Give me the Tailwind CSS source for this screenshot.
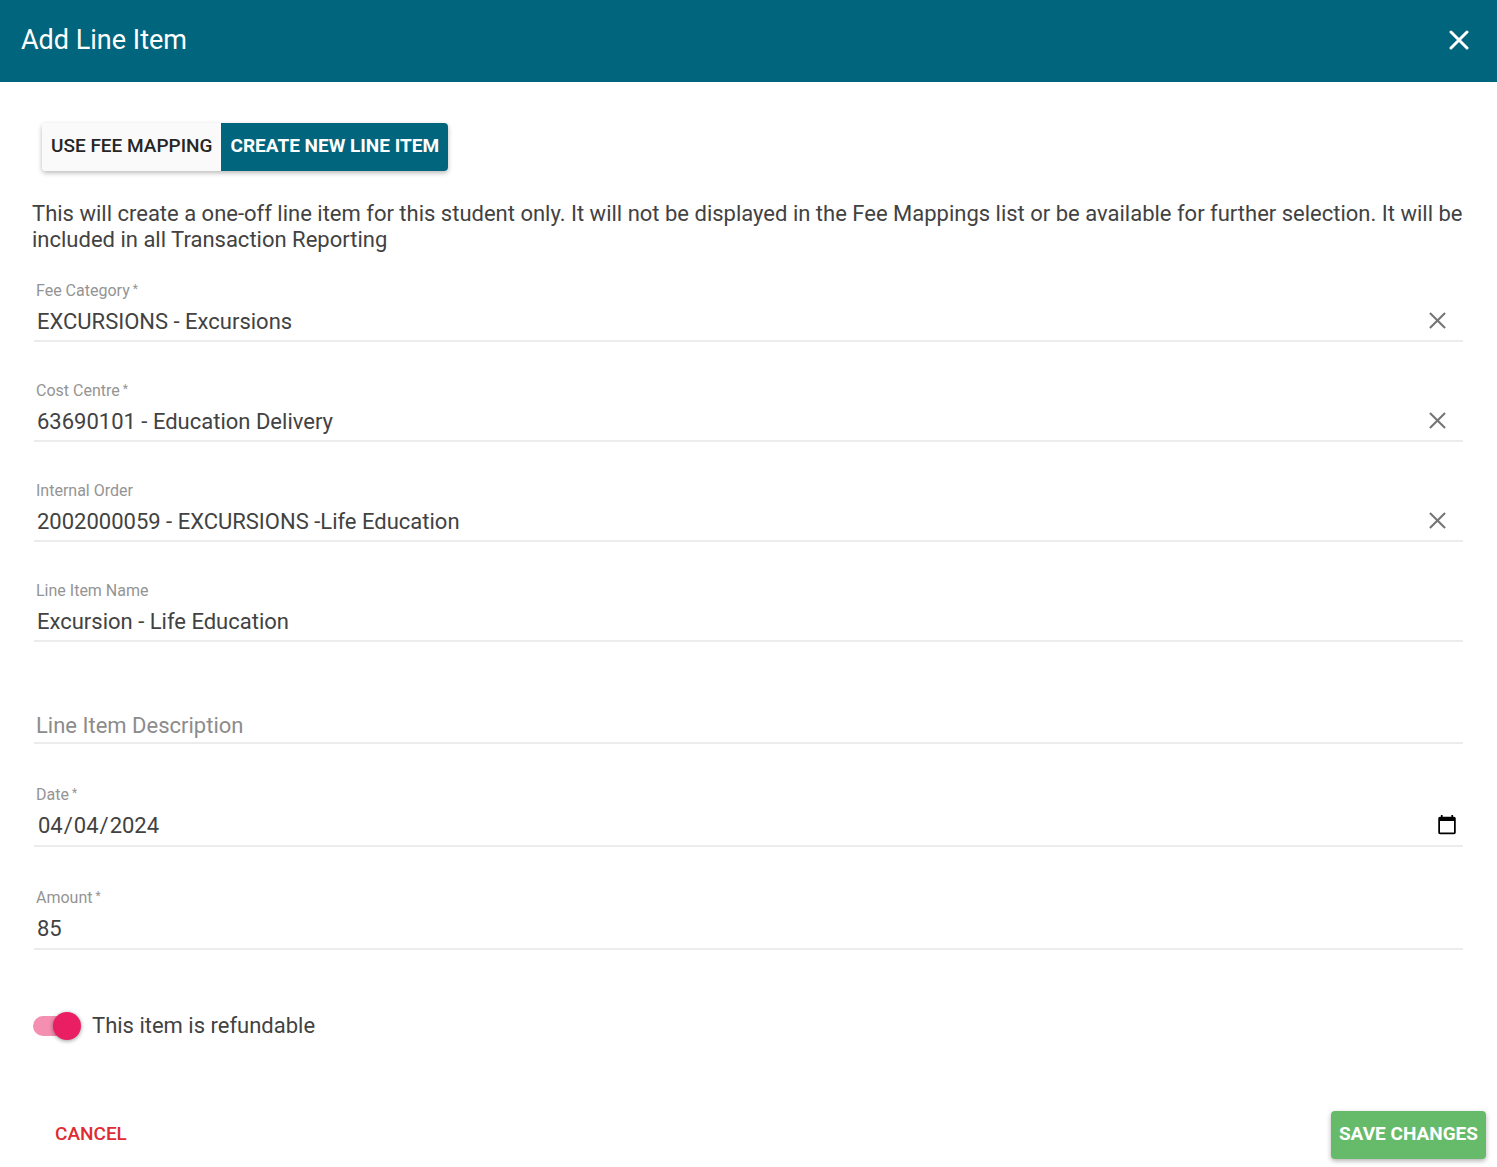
<!DOCTYPE html>
<html lang="en">
<head>
<meta charset="utf-8">
<meta name="viewport" content="width=device-width, initial-scale=1">
<title>Add Line Item</title>
<script src="https://cdn.jsdelivr.net/npm/@tailwindcss/browser@4"></script>
</head>
<body class="bg-white font-[Roboto,sans-serif] text-[22px] text-[#424242]">
<form class="flex min-h-screen flex-col">
  <header class="flex h-[82px] items-center justify-between bg-[#01657d] pr-6 pl-[21px] pb-[3px] text-white">
    <h1 class="text-[27px] leading-8">Add Line Item</h1>
    <button type="button" aria-label="Close" class="flex size-7 items-center justify-center">
      <svg class="size-5" viewBox="0 0 20 20" fill="none" stroke="currentColor" stroke-width="3" stroke-linecap="round"><path d="M2 2 18 18M18 2 2 18"/></svg>
    </button>
  </header>

  <main class="flex-1 px-[34px] pt-[41px]">
    <div class="ml-2 flex w-fit rounded-sm text-[19px] font-medium shadow-[0_2px_5px_rgba(0,0,0,0.28)]">
      <button type="button" class="h-12 rounded-l-sm bg-[#fafafa] px-[9px] pb-0.5 text-[#262626]">USE FEE MAPPING</button>
      <button type="button" class="h-12 rounded-r-sm bg-[#01657d] px-[9px] pb-0.5 font-bold text-white">CREATE NEW LINE ITEM</button>
    </div>

    <p class="mt-[30px] -ml-0.5 leading-[26px]">This will create a one-off line item for this student only. It will not be displayed in the Fee Mappings list or be available for further selection. It will be included in all Transaction Reporting</p>

    <div class="mt-7 flex flex-col gap-[39px]">
      <div class="border-b-2 border-[#ececec]">
        <label for="category" class="block pl-0.5 text-[16px] leading-5 text-[#949494]">Fee Category<span class="align-[3px] text-[12px] leading-none"> *</span></label>
        <div class="flex items-center pr-[17px]">
          <input id="category" value="EXCURSIONS - Excursions" class="h-[39px] min-w-0 flex-1 px-[3px] pt-px outline-none">
          <button type="button" aria-label="Clear fee category" class="p-0"><svg class="size-[17px]" viewBox="0 0 18 18" fill="none" stroke="#757575" stroke-width="2.2"><path d="M1 1 17 17M17 1 1 17"/></svg></button>
        </div>
      </div>
      <div class="border-b-2 border-[#ececec]">
        <label for="centre" class="block pl-0.5 text-[16px] leading-5 text-[#949494]">Cost Centre<span class="align-[3px] text-[12px] leading-none"> *</span></label>
        <div class="flex items-center pr-[17px]">
          <input id="centre" value="63690101 - Education Delivery" class="h-[39px] min-w-0 flex-1 px-[3px] pt-px outline-none">
          <button type="button" aria-label="Clear cost centre" class="p-0"><svg class="size-[17px]" viewBox="0 0 18 18" fill="none" stroke="#757575" stroke-width="2.2"><path d="M1 1 17 17M17 1 1 17"/></svg></button>
        </div>
      </div>
      <div class="border-b-2 border-[#ececec]">
        <label for="order" class="block pl-0.5 text-[16px] leading-5 text-[#949494]">Internal Order</label>
        <div class="flex items-center pr-[17px]">
          <input id="order" value="2002000059 - EXCURSIONS -Life Education" class="h-[39px] min-w-0 flex-1 px-[3px] pt-px outline-none">
          <button type="button" aria-label="Clear internal order" class="p-0"><svg class="size-[17px]" viewBox="0 0 18 18" fill="none" stroke="#757575" stroke-width="2.2"><path d="M1 1 17 17M17 1 1 17"/></svg></button>
        </div>
      </div>
      <div class="border-b-2 border-[#ececec]">
        <label for="name" class="block pl-0.5 text-[16px] leading-5 text-[#949494]">Line Item Name</label>
        <input id="name" value="Excursion - Life Education" class="block h-[39px] w-full px-[3px] pt-px outline-none">
      </div>
      <div class="border-b-2 border-[#ececec] pt-[27px]">
        <input id="description" aria-label="Line Item Description" placeholder="Line Item Description" class="block h-[34px] w-full px-0.5 outline-none placeholder:text-[#8c8c8c]">
      </div>
      <div class="mt-0.5 border-b-2 border-[#ececec]">
        <label for="date" class="block pl-0.5 text-[16px] leading-5 text-[#949494]">Date<span class="align-[3px] text-[12px] leading-none"> *</span></label>
        <input id="date" type="date" value="2024-04-04" class="block h-10 w-full px-[3px] outline-none">
      </div>
      <div class="mt-0.5 border-b-2 border-[#ececec]">
        <label for="amount" class="block pl-0.5 text-[16px] leading-5 text-[#949494]">Amount<span class="align-[3px] text-[12px] leading-none"> *</span></label>
        <input id="amount" inputmode="decimal" value="85" class="block h-10 w-full px-[3px] outline-none">
      </div>
    </div>

    <label class="mt-[60px] -ml-px flex w-fit items-center gap-[11px] leading-8">
      <input type="checkbox" checked class="flex h-5 w-12 appearance-none items-center rounded-full bg-linear-to-r from-[#f48fb1] to-[#f48fb1] bg-[length:40px_20px] bg-no-repeat before:size-7 before:shrink-0 before:rounded-full before:bg-[#e91e63] before:shadow-[0_1px_4px_rgba(0,0,0,0.4)] before:content-[''] checked:justify-end">
      This item is refundable
    </label>
  </main>

  <footer class="flex items-center justify-between pr-[11px] pb-2 pl-[47px] text-[19px] font-medium">
    <button type="button" class="h-12 px-2 pb-0.5 text-[#dd2c33]">CANCEL</button>
    <button type="submit" class="h-12 rounded-sm bg-[#66bb6a] px-2 pb-0.5 font-bold text-white shadow-[0_2px_5px_rgba(0,0,0,0.3)]">SAVE CHANGES</button>
  </footer>
</form>
</body>
</html>
